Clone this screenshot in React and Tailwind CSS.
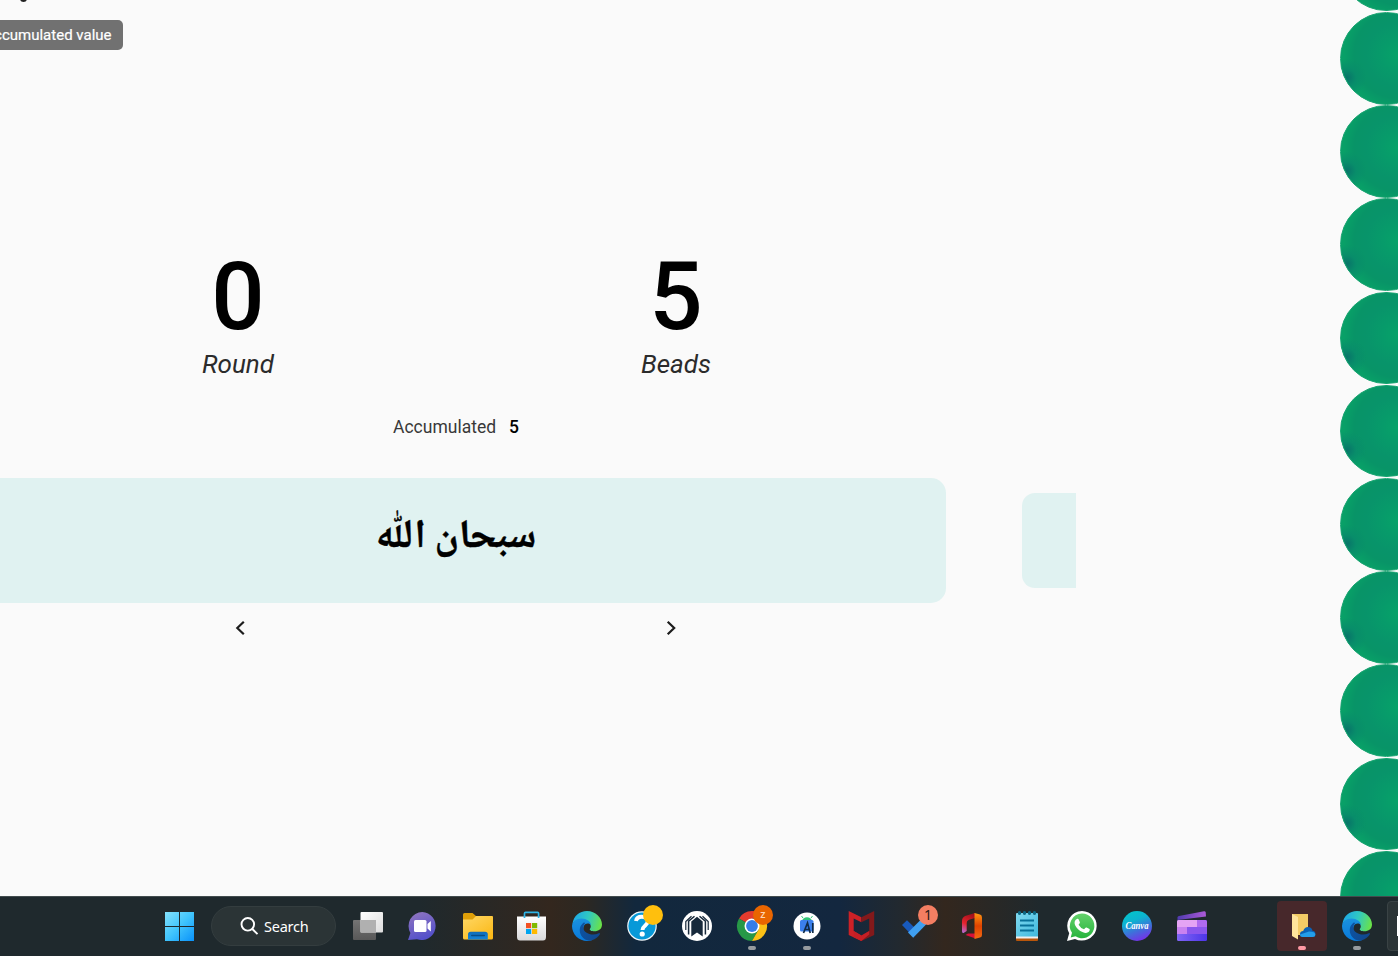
import React from "react";

const beads = Array.from({ length: 11 }, (_, i) => i);

function Icon({ children }) {
  return (
    <svg width="30" height="30" viewBox="0 0 30 30" className="block overflow-visible">
      {children}
    </svg>
  );
}

function TaskView() {
  return (
    <Icon>
      <defs>
        <linearGradient id="tv1" x1="0" y1="0" x2="1" y2="1">
          <stop offset="0" stopColor="#fff" />
          <stop offset="1" stopColor="#dcdcdc" />
        </linearGradient>
        <linearGradient id="tv2" x1="0" y1="0" x2="0" y2="1">
          <stop offset="0" stopColor="#747474" />
          <stop offset="1" stopColor="#585858" />
        </linearGradient>
      </defs>
      <rect x="1" y="9" width="23" height="20" rx="1" fill="url(#tv2)" />
      <rect x="8.500" y="1" width="22.500" height="20.500" rx="1" fill="url(#tv1)" />
      <rect x="8.500" y="9" width="15.500" height="12.500" fill="#b0b0b0" />
    </Icon>
  );
}

function Chat() {
  return (
    <Icon>
      <defs>
        <linearGradient id="chat" x1="0" y1="0" x2="0.400" y2="1">
          <stop offset="0" stopColor="#9478be" />
          <stop offset="0.500" stopColor="#7464c4" />
          <stop offset="1" stopColor="#5551cb" />
        </linearGradient>
      </defs>
      <path d="M15.300 1A14 14 0 1 1 10 28.200L1 29L3.400 22A14 14 0 0 1 15.300 1Z" fill="url(#chat)" />
      <rect x="7" y="9" width="12.500" height="12" rx="1.500" fill="#fff" />
      <path d="M20.500 13L23.800 10V20.500L20.500 17.500Z" fill="#fff" />
    </Icon>
  );
}

function Explorer() {
  return (
    <Icon>
      <defs>
        <linearGradient id="fold" x1="0" y1="0" x2="0.800" y2="1">
          <stop offset="0" stopColor="#ffd866" />
          <stop offset="1" stopColor="#fbb918" />
        </linearGradient>
        <linearGradient id="foldb" x1="0" y1="0" x2="0" y2="1">
          <stop offset="0" stopColor="#0f6cb8" />
          <stop offset="1" stopColor="#1485d8" />
        </linearGradient>
      </defs>
      <path d="M1 3.500Q1 2 2.500 2H10.500L14 5H30Q31 5 31 7V12H1Z" fill="#df9f08" />
      <path d="M1 8.500H10.500L14 5H30Q31 5 31 6.500V27Q31 28.500 29.500 28.500H2.500Q1 28.500 1 27Z" fill="url(#fold)" />
      <path d="M6 28.500V23.500Q6 20.800 8.700 20.800H23Q25.800 20.800 25.800 23.500V28.500Z" fill="url(#foldb)" />
      <rect x="9" y="23.700" width="14" height="1.600" rx="0.800" fill="#074d88" />
    </Icon>
  );
}

function Store() {
  return (
    <Icon>
      <defs>
        <linearGradient id="bag" x1="0" y1="0" x2="0" y2="1">
          <stop offset="0" stopColor="#fff" />
          <stop offset="1" stopColor="#d9d9da" />
        </linearGradient>
      </defs>
      <path d="M0 5.500H29V26Q29 29.500 26 29.500H3Q0 29.500 0 26Z" fill="url(#bag)" />
      <path d="M7.500 7V2.400Q7.500 1.400 8.500 1.400H20.600Q21.600 1.400 21.600 2.400V7" fill="none" stroke="#2fb4e6" strokeWidth="1.700" />
      <rect x="9" y="12" width="5.200" height="5.200" fill="#f25022" />
      <rect x="15" y="12" width="5.200" height="5.200" fill="#7fba00" />
      <rect x="9" y="18" width="5.200" height="5" fill="#00a4ef" />
      <rect x="15" y="18" width="5.200" height="5" fill="#ffb900" />
    </Icon>
  );
}

function Edge({ id }) {
  return (
    <Icon>
      <defs>
        <linearGradient id={id + "a"} x1="0" y1="0.400" x2="1" y2="0.600">
          <stop offset="0" stopColor="#1ca8e8" />
          <stop offset="0.500" stopColor="#31c9c0" />
          <stop offset="1" stopColor="#6be346" />
        </linearGradient>
        <linearGradient id={id + "b"} x1="0.200" y1="0" x2="0.300" y2="1">
          <stop offset="0" stopColor="#1b92df" />
          <stop offset="1" stopColor="#0879da" />
        </linearGradient>
        <linearGradient id={id + "c"} x1="0" y1="0" x2="1" y2="0.600">
          <stop offset="0" stopColor="#0c55a6" />
          <stop offset="1" stopColor="#10488f" />
        </linearGradient>
      </defs>
      <path d="M0.400 13C1.500 5 7.500 0 15 0C23.500 0 30 6.500 30 13.500C30 18 26.500 20.300 22.500 20.300C19.500 20.300 17.300 19.200 17.800 18C19.500 16.500 19 13 16.500 11C12.500 7.800 4 7.600 0.400 13Z" fill={"url(#" + id + "a)"} />
      <path d="M0 15C0 10.500 4.500 7.400 9.500 7.400C14.500 7.400 19 10.500 19 14.500C17.500 11.500 12.500 12 11.500 16C10 22 14.500 27.500 20 29.200C10 32.500 0 25 0 15Z" fill={"url(#" + id + "b)"} />
      <path d="M11.700 11.500C7 15 6.800 20.500 9.500 25C12 28.700 16 30.300 19.800 29.300C23.500 28.300 26.500 25.500 28 23C28.300 22.200 27.500 22 26.800 22.300C20 25.500 11 22 11.300 16.500C11.400 14.500 12.300 13 13.500 12Z" fill={"url(#" + id + "c)"} />
    </Icon>
  );
}

function Help() {
  return (
    <Icon>
      <circle cx="15" cy="15" r="14.800" fill="#f2f8fb" />
      <circle cx="15" cy="15" r="13.600" fill="#0799d8" />
      <path d="M9 10C9.500 6.700 12 5.700 14.800 5.700C18.300 5.700 20.800 7.500 20.800 10.300C20.800 14.400 15.500 14.500 15.500 19" fill="none" stroke="#fff" strokeWidth="3.900" />
      <circle cx="15.200" cy="23" r="2.600" fill="#fff" />
      <circle cx="26" cy="4" r="10" fill="#ffbf0d" />
    </Icon>
  );
}

function Ribbon() {
  return (
    <Icon>
      <circle cx="15" cy="15" r="15" fill="#fff" />
      <path d="M9.300 25.500V10.500L15 5.800L20.700 10.500V25.500L15 21.500Z" fill="#17293b" />
      <path d="M6.600 23.500V10.200L12.500 5.200M23.400 23.500V10.200L17.500 5.200" fill="none" stroke="#17293b" strokeWidth="1.500" />
      <path d="M3.800 19V10.500L9.500 5.200M26.200 19V10.500L20.500 5.200" fill="none" stroke="#17293b" strokeWidth="1.200" />
    </Icon>
  );
}

function Chrome() {
  return (
    <Icon>
      <path d="M15 15L2 7.500A15 15 0 0 1 28 7.500H15Z" fill="#e33b2e" />
      <path d="M15 15L2 7.500A15 15 0 0 0 15 30L21.500 18.700Z" fill="#279847" />
      <path d="M28 7.500A15 15 0 0 1 15 30L21.500 18.700L19 7.500Z" fill="#fbc116" />
      <circle cx="15" cy="15" r="7.500" fill="#fff" />
      <circle cx="15" cy="15" r="5.900" fill="#347de8" />
      <circle cx="26" cy="4" r="10" fill="#e96500" />
      <text x="26" y="7" textAnchor="middle" fontSize="11" fontWeight="600" fontFamily="Open Sans, sans-serif" fill="#ffd5b5">z</text>
    </Icon>
  );
}

function Studio() {
  return (
    <Icon>
      <circle cx="15" cy="15" r="13.500" fill="#fff" />
      <path d="M10 10A5.200 5.200 0 0 1 20 10Z" fill="#32c779" />
      <path d="M11 7L9.500 5M19 7L20.500 5" stroke="#32c779" strokeWidth="1" />
      <rect x="8" y="9" width="13.500" height="11.500" rx="1.500" fill="#3b80ed" />
      <path d="M11.500 22L15.500 12L18.200 22M13.500 18.500H17M20.800 12V22" fill="none" stroke="#102b48" strokeWidth="1.700" />
    </Icon>
  );
}

function McAfee() {
  return (
    <Icon>
      <path d="M1.700 0L14.400 6.200V11.300L6.700 7.500V20L14.400 24.500V30L1.700 24Z" fill="#cc2127" />
      <path d="M27.200 0L14.400 6.200V11.300L22.200 7.500V20L14.400 24.500V30L27.200 24Z" fill="#83191b" />
      <path d="M6.700 20L14.400 24.500L22.200 20V23.500L14.400 30L6.700 26.300Z" fill="#c51f25" />
    </Icon>
  );
}

function Todo() {
  return (
    <Icon>
      <path d="M0 14L5 9.200L14.500 18.500L9.300 23.700Z" fill="#185abd" />
      <path d="M6 21.500L21.500 6L26.500 11L11.200 26.700Z" fill="#3f9ff0" />
      <circle cx="26" cy="4" r="10" fill="#f47e62" />
      <text x="26" y="9" textAnchor="middle" fontSize="14" fontFamily="Noto Sans, sans-serif" fill="#2b1b19">1</text>
    </Icon>
  );
}

function Office() {
  return (
    <Icon>
      <defs>
        <linearGradient id="offa" x1="0.500" y1="0" x2="0.200" y2="1">
          <stop offset="0" stopColor="#a3101c" />
          <stop offset="0.550" stopColor="#e5242d" />
          <stop offset="1" stopColor="#b56bd3" />
        </linearGradient>
        <linearGradient id="offb" x1="0" y1="0" x2="0" y2="1">
          <stop offset="0" stopColor="#ff9713" />
          <stop offset="0.500" stopColor="#df4300" />
          <stop offset="1" stopColor="#f36b13" />
        </linearGradient>
      </defs>
      <path d="M18 2L8 5Q5 6.500 5 10V20Q5 22.500 6.500 22L9.700 20V12Q9.700 9.500 12 8.700L18 7Z" fill="url(#offa)" />
      <path d="M8.500 24L11 22.500H18.500V27.500Z" fill="#d81138" />
      <path d="M17.500 2L23 3.500Q25 4.200 25 6.500V24Q25 26 23 26.600L17.500 28Z" fill="url(#offb)" />
    </Icon>
  );
}

function Notepad() {
  return (
    <Icon>
      <defs>
        <linearGradient id="note" x1="0" y1="0" x2="1" y2="1">
          <stop offset="0" stopColor="#80daf0" />
          <stop offset="1" stopColor="#40b8dc" />
        </linearGradient>
      </defs>
      <rect x="4" y="25" width="22" height="5" rx="1" fill="#b8560b" />
      <rect x="4" y="25" width="22" height="2.500" fill="#eee" />
      <path d="M4 3Q4 2 5 2H25Q26 2 26 3V25.500H4Z" fill="url(#note)" />
      <path d="M8 9.500H22M8 14.500H22M8 19.500H22" stroke="#087199" strokeWidth="1.800" />
      {[7.5, 12.5, 17.5, 22.5].map((x) => (
        <ellipse key={x} cx={x} cy="2" rx="1.700" ry="2" fill="#0d6985" />
      ))}
    </Icon>
  );
}

function WhatsApp() {
  return (
    <Icon>
      <defs>
        <linearGradient id="wa" x1="0" y1="0" x2="0" y2="1">
          <stop offset="0" stopColor="#64d16b" />
          <stop offset="1" stopColor="#27b43e" />
        </linearGradient>
      </defs>
      <path d="M15 0A14.800 14.800 0 1 1 8 27.900L0 30L2.200 22.200A14.800 14.800 0 0 1 15 0Z" fill="#fff" />
      <path d="M15 2.600A12.300 12.300 0 1 1 8.500 25.300L3.700 26.500L5 21.800A12.300 12.300 0 0 1 15 2.600Z" fill="url(#wa)" />
      <path transform="translate(0 -0.500)" d="M10.300 8.200Q11.300 8 11.700 9L12.900 11.800Q13 12.500 12.300 13.300L11.600 14.200Q13.500 17.500 17 18.800L18.500 17.200Q19 16.700 19.600 17L22.500 18.500Q23 19 22.500 20.300C21.500 22.500 18.500 22.900 16 21.800C12 20.300 9.500 17.500 8 14.500C7 12 7.800 9 10.300 8.200Z" fill="#fff" />
    </Icon>
  );
}

function Canva() {
  return (
    <Icon>
      <defs>
        <linearGradient id="canva" x1="0.300" y1="0" x2="0.700" y2="1">
          <stop offset="0" stopColor="#04c3cb" />
          <stop offset="0.300" stopColor="#0cb4d0" />
          <stop offset="0.650" stopColor="#416ddb" />
          <stop offset="1" stopColor="#7b2be9" />
        </linearGradient>
      </defs>
      <circle cx="15" cy="15" r="15" fill="url(#canva)" />
      <text x="15" y="17.800" textAnchor="middle" textLength="23" lengthAdjust="spacingAndGlyphs" fontSize="9.500" fontStyle="italic" fontWeight="700" fontFamily="Liberation Serif, serif" fill="#fff">Canva</text>
    </Icon>
  );
}

function Clipchamp() {
  return (
    <Icon>
      <defs>
        <linearGradient id="clip" x1="0" y1="0" x2="1" y2="0">
          <stop offset="0" stopColor="#503bb0" />
          <stop offset="1" stopColor="#ad5ad8" />
        </linearGradient>
        <linearGradient id="clip2" x1="0" y1="0" x2="1" y2="0">
          <stop offset="0" stopColor="#8066f6" />
          <stop offset="1" stopColor="#4d35e8" />
        </linearGradient>
        <clipPath id="board">
          <rect x="0" y="9" width="30" height="21" rx="1.500" />
        </clipPath>
      </defs>
      <path d="M0.500 6.500Q0.500 5.300 2 5L27 0.200Q28.500 0 28.700 1.500L29 5.500L0.500 9Z" fill="url(#clip)" />
      <g clipPath="url(#board)">
        <path d="M0 9H30V30H0Z" fill="url(#clip2)" />
        <path d="M0 9H20V16H0Z" fill="#e5a4f4" />
        <path d="M20 9H30V16H20Z" fill="#b06af0" />
        <path d="M0 16H10V23H0Z" fill="#c982f0" />
        <path d="M10 16H30V23H10Z" fill="#8b56ed" />
      </g>
    </Icon>
  );
}

function CloudFolder() {
  return (
    <Icon>
      <path d="M5 3H21V24H5Z" fill="#f3cb66" />
      <path d="M5 3L11 6V28.500L5 25Z" fill="#ffe49b" />
      <path d="M16 26Q13 26 13 23Q13 20.300 16.200 20Q17.500 16 21 16Q24.700 16 25.500 19.700Q28.500 20 28.500 23Q28.500 26 25.500 26Z" fill="#0b62b5" />
      <path d="M15.500 26Q13 26 13 23.500L22 20.500Q28.300 20.500 28.300 23.500Q28.300 26 25.500 26Z" fill="#239ee9" />
    </Icon>
  );
}

const slots = [
  { icon: <TaskView /> },
  { icon: <Chat /> },
  { icon: <Explorer /> },
  { icon: <Store /> },
  { icon: <Edge id="edge" /> },
  { icon: <Help /> },
  { icon: <Ribbon /> },
  { icon: <Chrome />, open: true },
  { icon: <Studio />, open: true },
  { icon: <McAfee /> },
  { icon: <Todo /> },
  { icon: <Office /> },
  { icon: <Notepad /> },
  { icon: <WhatsApp /> },
  { icon: <Canva /> },
  { icon: <Clipchamp /> },
  { icon: null },
  { icon: <CloudFolder />, alert: true },
  { icon: <Edge id="edgeb" />, open: true },
];

function Taskbar() {
  return (
    <footer className="flex h-[60px] w-full items-center overflow-hidden border-t border-[#424c4e] bg-[linear-gradient(90deg,#1f292d_0,#1f292d_420px,#33271e_550px,#2c2822_585px,#12283d_635px,#13273f_840px,#22292f_900px,#33271e_945px,#1f292d_1040px,#1f292d_100%)] pb-px pl-[165px]">
      <svg width="29" height="29" viewBox="0 0 29 29" className="shrink-0">
        <defs>
          <linearGradient id="win" gradientUnits="userSpaceOnUse" x1="0" y1="0" x2="29" y2="29">
            <stop offset="0" stopColor="#83e1fc" />
            <stop offset="0.500" stopColor="#40c4fc" />
            <stop offset="1" stopColor="#0a92fa" />
          </linearGradient>
        </defs>
        <path d="M0 0H14V14H0ZM15 0H29V14H15ZM0 15H14V29H0ZM15 15H29V29H15Z" fill="url(#win)" />
      </svg>
      <div className="ml-[17px] flex h-10 w-[125px] shrink-0 items-center rounded-full border border-[#343d3f] bg-[#2b3436] pl-7">
        <svg width="19" height="19" viewBox="0 0 19 19" fill="none" stroke="#fff" strokeWidth="1.900" className="shrink-0">
          <circle cx="7.800" cy="7.300" r="6.300" />
          <path d="M12.300 12L17.500 17.200" />
        </svg>
        <span className="ml-[5px] pt-px font-['Noto_Sans',sans-serif] text-[14.500px] tracking-[-0.250px] text-white">Search</span>
      </div>
      <div className="ml-[3px] flex h-full shrink-0">
        {slots.map((s, i) => (
          <div key={i} className="flex h-full w-[55px] shrink-0 items-center justify-center">
            <div className={s.alert ? "relative flex h-[50px] w-[50px] items-center justify-center rounded bg-[#47282b]" : "relative flex h-[50px] w-[50px] items-center justify-center"}>
              {s.icon}
              {(s.open || s.alert) && (
                <span className={s.alert ? "absolute bottom-px left-[21px] h-1 w-2 rounded-full bg-[#ff99a4]" : "absolute bottom-px left-[21px] h-1 w-2 rounded-full bg-[#969b9f]"} />
              )}
            </div>
          </div>
        ))}
      </div>
      <div className="ml-[3px] flex h-[50px] w-[50px] shrink-0 items-center rounded border border-[#3a4345] bg-[#2b3436] pl-[9px]">
        <div className="h-5 w-8 bg-white" />
      </div>
    </footer>
  );
}

function Counter({ value, label }) {
  return (
    <div className="flex w-[160px] flex-col items-center">
      <div className="h-[112px] text-[94px] font-medium leading-[114px] text-black">{value}</div>
      <div className="mt-[-3px] text-[26px] italic leading-[30px] text-[#2b2b2b]">{label}</div>
    </div>
  );
}

function Chevron({ d }) {
  return (
    <svg width="24" height="24" viewBox="0 0 24 24" fill="none" stroke="#1c1c1c" strokeWidth="2.200">
      <path d={d} />
    </svg>
  );
}

export default function App() {
  return (
    <div className="flex h-[956px] w-[1398px] flex-col overflow-hidden bg-[#fafafa] font-['Roboto',sans-serif]">
      <div className="flex h-[896px] shrink-0 overflow-hidden">
        <main className="flex w-[1076px] flex-col overflow-hidden">
          <div className="flex h-5 items-start pl-5">
            <div className="mt-[-5px] h-[7px] w-[7px] rounded-full bg-[#212121]" />
          </div>
          <div className="flex h-[30px] w-[122.500px] items-center justify-end rounded-r-[5px] bg-[#717171] pr-[11px] text-[15px] whitespace-nowrap text-white [-webkit-text-stroke:0.200px_#fff]">
            Accumulated value
          </div>
          <div className="mt-[190px] flex gap-[278px] pl-[158px]">
            <Counter value="0" label="Round" />
            <Counter value="5" label="Beads" />
          </div>
          <div className="mt-[36px] flex h-6 w-[912px] items-center justify-center gap-[13px] text-[17.500px]">
            <span className="text-[#383838]">Accumulated</span>
            <span className="font-medium text-black">5</span>
          </div>
          <div className="mt-[39px] flex h-[125px] items-center">
            <div className="flex h-full w-[946px] shrink-0 items-center rounded-r-[15px] bg-[#e0f2f1]">
              <div dir="rtl" lang="ar" className="w-[912px] pb-[6px] text-center font-['Noto_Naskh_Arabic','Noto_Sans_Arabic','DejaVu_Sans',sans-serif] text-[40px] font-bold leading-[60px] text-black [-webkit-text-stroke:0.400px_#000]">
                سبحان اللّٰه
              </div>
            </div>
            <div className="ml-[76px] h-[95px] w-[54px] shrink-0 rounded-l-[13px] bg-[#e0f2f1]" />
          </div>
          <div className="mt-[13px] flex gap-[407px] pl-[228px]">
            <Chevron d="M15.800 5.700L9.300 12L15.800 18.300" />
            <Chevron d="M8.700 5.700L15.200 12L8.700 18.300" />
          </div>
        </main>
        <aside className="ml-[264px] w-[58px] overflow-hidden">
          <div className="mt-[-81.200px]">
            {beads.map((b) => (
              <div key={b} className="flex h-[93.200px] w-[93px] items-start">
                <div className="h-[92.600px] w-[93px] rounded-full border border-[#19a371] bg-[radial-gradient(circle_at_7%_71%,#087569_0%,#088d6a_8%,transparent_18%),radial-gradient(circle_at_62%_46%,#07a269_0%,#079b6a_20%,#08946a_42%,#089467_58%,#08a067_72%)]" />
              </div>
            ))}
          </div>
        </aside>
      </div>
      <Taskbar />
    </div>
  );
}
